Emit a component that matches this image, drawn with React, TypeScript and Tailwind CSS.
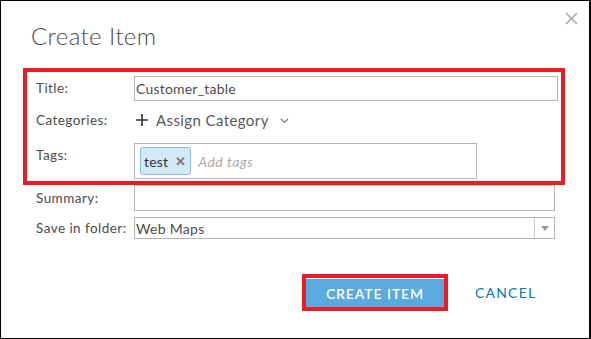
import React from 'react';

const font = { fontFamily: 'Lato, "Open Sans", sans-serif' };

const Label: React.FC<{ children: React.ReactNode; top?: boolean }> = ({ children, top }) => (
  <div className={`w-[98px] shrink-0 text-[13.5px] tracking-[0.45px] text-[#4c4c4c] ${top ? 'self-start pt-[2px]' : ''}`}>{children}</div>
);

const App: React.FC = () => {
  return (
    <div className="relative h-[339px] w-[591px] overflow-hidden border border-r-2 border-black bg-white" style={font}>
      <button className="absolute right-[11px] top-[11px] text-[#aaaaaa]" aria-label="close">
        <svg width="13" height="13" viewBox="0 0 13 13" fill="none" stroke="currentColor" strokeWidth="1.6">
          <path d="M1 1l11 11M12 1L1 12" />
        </svg>
      </button>

      <h1 className="pl-[30px] pt-[20px] text-[24px] font-light leading-[30px] tracking-[0.4px] text-[#4c4c4c]">Create Item</h1>

      <div className="ml-[22px] mt-[17px] h-[117px] w-[542px] border-4 border-[#ed1c24] pl-[9px] pr-[3px] pt-[4px]">
        <div className="flex h-[25px] items-center">
          <Label>Title:</Label>
          <input
            readOnly
            value="Customer_table"
            className="h-[25px] flex-1 border border-[#b5b5b5] px-[1px] text-[14px] tracking-[0.2px] text-[#4c4c4c] outline-none"
          />
        </div>
        <div className="flex h-[38px] items-center">
          <Label>Categories:</Label>
          <div className="flex items-center text-[#595959]">
            <svg width="12" height="12" viewBox="0 0 12 12" className="ml-[2px]" stroke="#333" strokeWidth="1.6">
              <path d="M6 0v12M0 6h12" />
            </svg>
            <span className="ml-[8px] text-[15px] tracking-[0.4px]">Assign Category</span>
            <svg width="9" height="6" viewBox="0 0 9 6" className="ml-[11px] mt-[2px]" fill="none" stroke="#777" strokeWidth="1.1">
              <path d="M1 1l3.5 3.5L8 1" />
            </svg>
          </div>
        </div>
        <div className="mt-[4px] flex">
          <Label top>Tags:</Label>
          <div className="flex h-[36px] w-[343px] items-center border border-[#b5b5b5] pl-[5px]">
            <div className="flex h-[28px] items-center rounded-[3px] border border-[#89bde2] bg-[#d4e9f8] pl-[3px] pr-[4px]">
              <span className="text-[14px] tracking-[0.2px] text-[#333]">test</span>
              <span className="ml-[7px] text-[13px] font-bold leading-none text-[#777]">✕</span>
            </div>
            <span className="ml-[7px] text-[14px] italic tracking-[0.5px] text-[#aaaaaa]">Add tags</span>
          </div>
        </div>
      </div>

      <div className="pl-[35px] pr-[34px]">
        <div className="flex h-[26px] items-center">
          <Label>Summary:</Label>
          <div className="h-[26px] flex-1 border border-[#b5b5b5]" />
        </div>
        <div className="mt-[6px] flex h-[22px] items-center">
          <Label>Save in folder:</Label>
          <div className="flex h-[22px] flex-1 items-center border border-[#b5b5b5]">
            <span className="flex-1 pl-[1px] text-[14px] tracking-[0.3px] text-[#4c4c4c]">Web Maps</span>
            <div className="flex h-full w-[20px] items-center justify-center border-l border-[#c8c8c8]">
              <svg width="8" height="5" viewBox="0 0 8 5" fill="#999">
                <path d="M0 0h8L4 5z" />
              </svg>
            </div>
          </div>
        </div>
      </div>

      <div className="mt-[35px] flex items-center pl-[301px]">
        <div className="border-4 border-[#ed1c24]">
          <button className="h-[29px] w-[138px] border-t border-white bg-[#5aaadd] text-[14px] font-semibold tracking-[0.9px] text-white">
            CREATE ITEM
          </button>
        </div>
        <span className="ml-[27px] text-[14px] tracking-[1.2px] text-[#0079c1]">CANCEL</span>
      </div>
    </div>
  );
};

export default App;
